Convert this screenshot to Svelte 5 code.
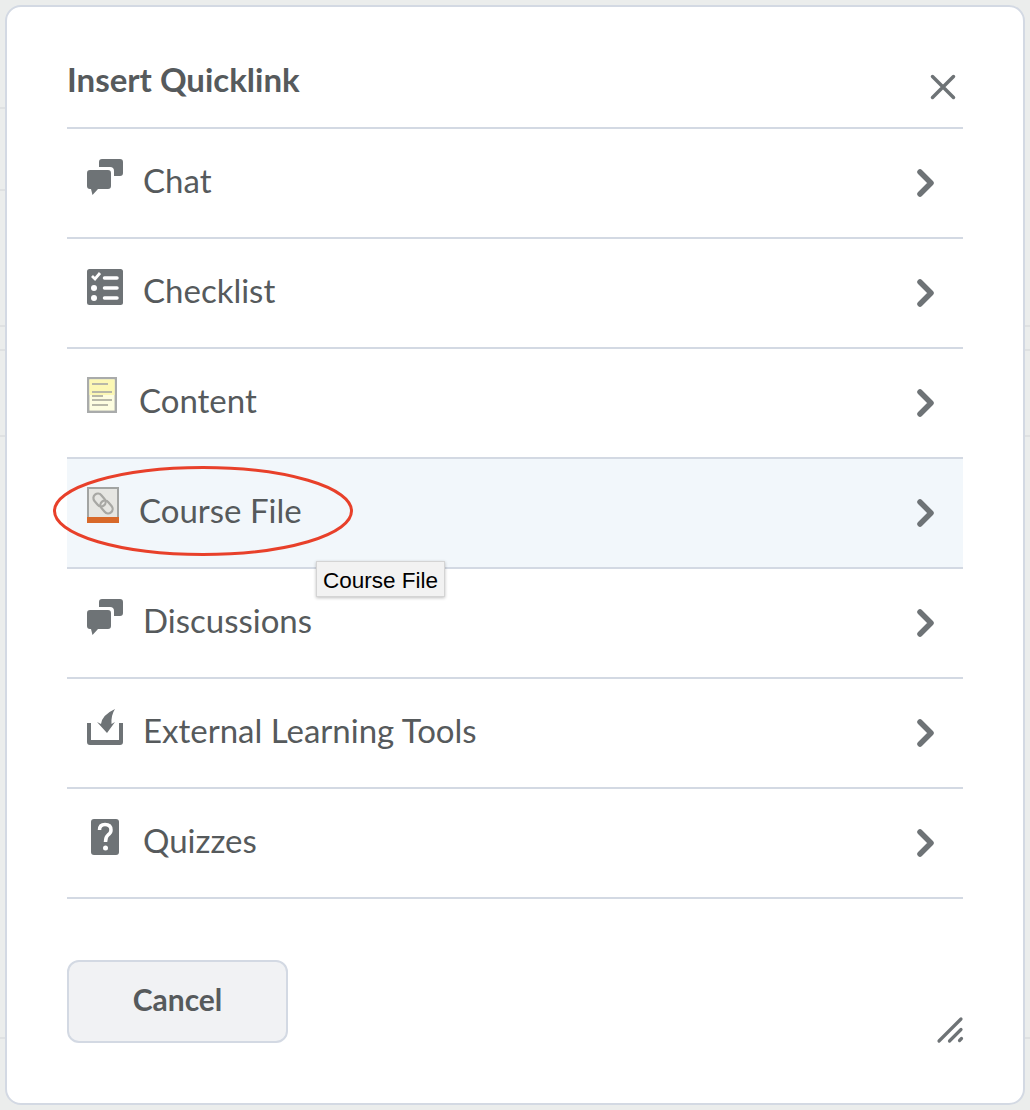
<script>
  const items = [
    { label: "Chat", icon: "chat", gap: 19, up: -13 },
    { label: "Checklist", icon: "checklist", gap: 19, up: -11 },
    { label: "Content", icon: "content", gap: 21, up: -15 },
    { label: "Course File", icon: "file", gap: 19, up: -15, active: true },
    { label: "Discussions", icon: "chat", gap: 19, up: -13 },
    { label: "External Learning Tools", icon: "external", gap: 19, up: -11 },
    { label: "Quizzes", icon: "quiz", gap: 19, up: -11 }
  ];
</script>

<div class="page">
  <div class="dialog">
    <header>
      <h1>Insert Quicklink</h1>
      <svg class="close" width="28" height="28" viewBox="0 0 28 28">
        <path d="M3.500 3.500 L24.500 24.500 M24.500 3.500 L3.500 24.500" stroke="#6e7376" stroke-width="3.500" stroke-linecap="round" />
      </svg>
    </header>

    <ul>
      {#each items as item}
        <li class:active={item.active}>
          <span class="icon" style="margin-top: {item.up}px">
            {#if item.icon === "chat"}
              <svg width="37" height="37" viewBox="0 0 37 37" fill="#6e7376">
                <path d="M15 1 H33 Q36 1 36 4 V15 Q36 18 33 18 H27 V13 Q27 9 23 9 H12 V4 Q12 1 15 1 Z" />
                <path d="M3 12 H21 Q24 12 24 15 V28 Q24 31 21 31 H11 L5.500 37 L4 31 H3 Q0 31 0 28 V15 Q0 12 3 12 Z" />
              </svg>
            {:else if item.icon === "checklist"}
              <svg width="37" height="37" viewBox="0 0 37 37">
                <rect x="0" y="0" width="36" height="36" rx="2.500" fill="#6e7376" />
                <path d="M5 7 L8 10 L13 4" fill="none" stroke="#fff" stroke-width="2.800" />
                <circle cx="7" cy="19" r="3" fill="#fff" />
                <circle cx="7" cy="29" r="3" fill="#fff" />
                <path d="M17.500 9 H30 M17.500 19 H30 M17.500 29 H30" stroke="#fff" stroke-width="3.500" stroke-linecap="round" />
              </svg>
            {:else if item.icon === "content"}
              <svg width="31" height="37" viewBox="0 0 31 37">
                <rect x="1.200" y="1.200" width="27.600" height="33.600" fill="#fdfde0" stroke="#a9abab" stroke-width="2.400" />
                <rect x="2.400" y="2.400" width="25.200" height="15.600" fill="#fcf8b4" />
                <path d="M5 7 H21 M5 15 H25 M5 19 H16 M5 23 H25 M5 28 H21" stroke="#b8b8a8" stroke-width="1.800" />
              </svg>
            {:else if item.icon === "file"}
              <svg width="33" height="37" viewBox="0 0 33 37">
                <rect x="1" y="1" width="30" height="34" fill="#e6e6e2" stroke="#a2a4a2" stroke-width="2" />
                <rect x="0" y="30" width="32" height="6" fill="#d8692a" />
                <g fill="none" stroke="#a8a8a4" stroke-width="2.200">
                  <rect x="8" y="6" width="9" height="14" rx="4.500" transform="rotate(-40 12.500 13)" />
                  <rect x="15" y="13" width="9" height="14" rx="4.500" transform="rotate(-40 19.500 20)" />
                </g>
              </svg>
            {:else if item.icon === "external"}
              <svg width="37" height="37" viewBox="0 0 37 37" fill="#6e7376">
                <path d="M0 14 H4 V31 H32 V14 H36 V33 Q36 36 33 36 H3 Q0 36 0 33 Z" />
                <path d="M10 13 L14 15 Q15 6 28 0 Q24 6 24.500 15 L28 13 L20 24 Z" />
              </svg>
            {:else}
              <svg width="37" height="37" viewBox="0 0 37 37">
                <rect x="4" y="0" width="28" height="36" rx="3" fill="#6e7376" />
                <path d="M12.500 11 Q12.500 5.500 18 5.500 Q24 5.500 24 11 Q24 14 21 16 Q18.500 18 18.500 23" fill="none" stroke="#fff" stroke-width="3.500" />
                <circle cx="18.500" cy="29" r="2.500" fill="#fff" />
              </svg>
            {/if}
          </span>
          <span class="label" style="margin-left: {item.gap}px">{item.label}</span>
          <svg class="chevron" width="18" height="28" viewBox="0 0 18 28">
            <path d="M3 3 L14 14 L3 25" fill="none" stroke="#6e7376" stroke-width="5.500" stroke-linecap="round" stroke-linejoin="round" />
          </svg>
        </li>
      {/each}
    </ul>

    <footer>
      <button>Cancel</button>
      <svg class="grip" width="28" height="28" viewBox="0 0 28 28">
        <path d="M3 25 L25 3 M13.500 25 L25 13.500 M23.500 24.500 L25.500 22.500" stroke="#6e7376" stroke-width="3.200" stroke-linecap="round" />
      </svg>
    </footer>

    <svg class="circle" width="304" height="96" viewBox="0 0 304 96">
      <ellipse cx="152" cy="48" rx="148.500" ry="43.500" fill="none" stroke="#e8402a" stroke-width="3" />
    </svg>
    <div class="tooltip">Course File</div>
  </div>
</div>

<style>
  :global(body) {
    margin: 0;
    background: #ebedec;
  }
  .page {
    height: 1110px;
    padding: 5px;
    box-sizing: border-box;
    font-family: Lato, "Liberation Sans", sans-serif;
    color: #565a5c;
    background-image:
      linear-gradient(#dfe1e2, #dfe1e2),
      linear-gradient(#dfe1e2, #dfe1e2),
      linear-gradient(#dfe1e2, #dfe1e2),
      linear-gradient(#dfe1e2, #dfe1e2),
      linear-gradient(#dfe1e2, #dfe1e2),
      linear-gradient(#dfe1e2, #dfe1e2);
    background-repeat: no-repeat;
    background-size: 5px 2px, 5px 2px, 100% 2px, 100% 2px, 100% 2px, 100% 2px;
    background-position: 0 107px, 0 189px, 0 325px, 0 349px, 0 435px, 0 1037px;
  }
  .dialog {
    position: relative;
    height: 100%;
    box-sizing: border-box;
    background: #fff;
    border: 2px solid #d3d9e3;
    border-radius: 16px;
    padding: 0 60px;
  }
  header {
    height: 120px;
    display: flex;
    justify-content: space-between;
  }
  h1 {
    margin: 54px 0 0;
    font-size: 33px;
    line-height: 36px;
    font-weight: 700;
  }
  .close {
    margin: 66px 6px 0 0;
  }
  ul {
    list-style: none;
    margin: 0;
    padding: 0;
    border-top: 2px solid #d3d9e3;
  }
  li {
    height: 108px;
    border-bottom: 2px solid #d3d9e3;
    display: flex;
    align-items: center;
    padding: 0 28px 0 20px;
  }
  li.active {
    background: #f2f7fb;
  }
  .icon {
    display: flex;
  }
  .label {
    font-size: 33px;
    line-height: 40px;
    padding-bottom: 7px;
    flex: 1;
  }
  .chevron {
    display: block;
  }
  footer {
    margin-top: 61px;
    display: flex;
    justify-content: space-between;
    align-items: flex-end;
  }
  button {
    width: 221px;
    height: 83px;
    box-sizing: border-box;
    padding: 0 0 6px;
    background: #f1f2f4;
    border: 2px solid #d3d9e3;
    border-radius: 12px;
    font-family: inherit;
    font-size: 30px;
    font-weight: 700;
    color: #565a5c;
  }
  .grip {
    margin-right: -1px;
    margin-bottom: -1px;
  }
  .circle {
    position: absolute;
    left: 44px;
    top: 456px;
  }
  .tooltip {
    position: absolute;
    left: 309px;
    top: 554px;
    height: 36px;
    box-sizing: border-box;
    padding: 3px 6px 0;
    display: flex;
    align-items: center;
    background: #f2f2f2;
    border: 1px solid #d4d4d4;
    box-shadow: 0 1px 3px rgba(0, 0, 0, 0.25);
    font-family: "Liberation Sans", sans-serif;
    font-size: 22.500px;
    color: #000;
  }
</style>
